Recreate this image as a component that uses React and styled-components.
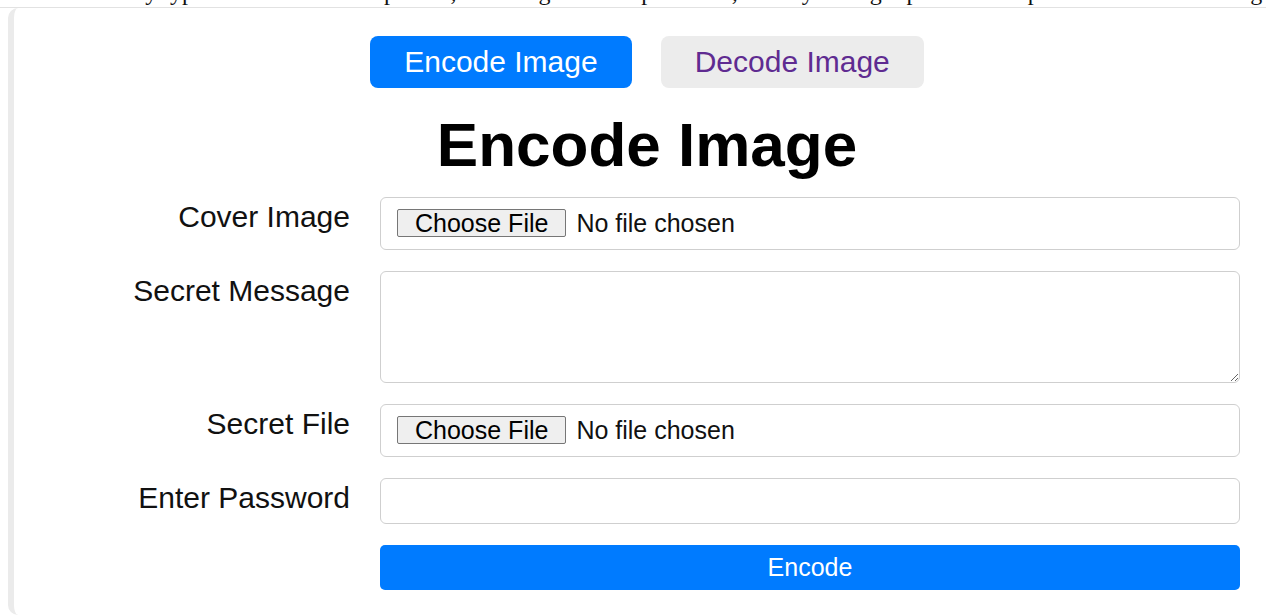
import styled, { createGlobalStyle } from "styled-components";
import { useState } from "react";

const GlobalStyle = createGlobalStyle`
  html, body {
    margin: 0;
    padding: 0;
    background: #fff;
    overflow: hidden;
  }
  body {
    font-family: "Liberation Sans", Arial, sans-serif;
  }
`;

// the description line above the tool, mostly scrolled out of view
const Intro = styled.div`
  height: 7px;
  overflow: hidden;
  border-bottom: 1px solid #e2e2e2;
  padding-left: 70px;
  white-space: nowrap;
  font-family: "Liberation Serif", "Times New Roman", serif;
  font-size: 24px;
  line-height: 28px;
  color: #111;

  p {
    margin: -22px 0 0;
  }
`;

const Page = styled.main`
  padding-left: 8px;
`;

const Card = styled.section`
  box-sizing: border-box;
  width: 1272px;
  min-height: 607px;
  padding: 28px 0 25px;
  background: #fff;
  border-left: 6px solid #ebebeb;
  border-radius: 10px 0 0 10px;
`;

const Tabs = styled.nav`
  display: flex;
  justify-content: center;
  gap: 29px;
`;

const TabButton = styled.button`
  height: 52px;
  padding: 0 34px;
  border: none;
  border-radius: 8px;
  font-family: inherit;
  font-size: 30px;
  cursor: pointer;
  background: ${(p) => (p.$active ? "#007bff" : "#ececec")};
  color: ${(p) => (p.$active ? "#fff" : "#5f2b91")};
`;

const Title = styled.h1`
  margin: 21px 0 17px;
  text-align: center;
  font-size: 62px;
  font-weight: 700;
  color: #000;
`;

const Form = styled.form`
  display: grid;
  grid-template-columns: 336px 860px;
  column-gap: 30px;
  row-gap: 21px;
`;

const Label = styled.label`
  padding-top: 3px;
  text-align: right;
  font-size: 30px;
  color: #111;
`;

const FileBox = styled.div`
  box-sizing: border-box;
  height: 53px;
  display: flex;
  align-items: center;
  padding: 0 16px;
  border: 1px solid #cfcfcf;
  border-radius: 6px;
`;

const FileInput = styled.input`
  font-family: "Liberation Sans", Arial, sans-serif;
  font-size: 25px;
  color: #111;

  &::file-selector-button {
    font: inherit;
    height: 28px;
    line-height: 26px;
    padding: 0 17px;
    margin-right: 10px;
    border: 1px solid #767676;
    border-radius: 2px;
    background: #efefef;
    color: #000;
  }
`;

const MessageArea = styled.textarea`
  box-sizing: border-box;
  width: 100%;
  height: 112px;
  padding: 10px 16px;
  border: 1px solid #cfcfcf;
  border-radius: 6px;
  font-family: inherit;
  font-size: 25px;
  resize: vertical;
`;

const TextInput = styled.input`
  box-sizing: border-box;
  width: 100%;
  height: 46px;
  padding: 0 16px;
  border: 1px solid #cfcfcf;
  border-radius: 6px;
  font-family: inherit;
  font-size: 25px;
`;

const SubmitButton = styled.button`
  grid-column: 2;
  height: 45px;
  border: none;
  border-radius: 5px;
  background: #007bff;
  color: #fff;
  font-family: inherit;
  font-size: 25px;
  cursor: pointer;
`;

function App() {
  const [mode, setMode] = useState("encode");

  return (
    <>
      <GlobalStyle />
      <Intro>
        <p>
          Hide any type of text or file in a picture, encoding it with a
          password, so only the right person can open and read the message.
        </p>
      </Intro>
      <Page>
        <Card>
          <Tabs>
            <TabButton
              type="button"
              $active={mode === "encode"}
              onClick={() => setMode("encode")}
            >
              Encode Image
            </TabButton>
            <TabButton
              type="button"
              $active={mode === "decode"}
              onClick={() => setMode("decode")}
            >
              Decode Image
            </TabButton>
          </Tabs>
          <Title>Encode Image</Title>
          <Form onSubmit={(e) => e.preventDefault()}>
            <Label htmlFor="cover">Cover Image</Label>
            <FileBox>
              <FileInput id="cover" type="file" accept="image/*" />
            </FileBox>

            <Label htmlFor="message">Secret Message</Label>
            <MessageArea id="message" />

            <Label htmlFor="secret">Secret File</Label>
            <FileBox>
              <FileInput id="secret" type="file" />
            </FileBox>

            <Label htmlFor="password">Enter Password</Label>
            <TextInput id="password" type="password" />

            <SubmitButton type="submit">Encode</SubmitButton>
          </Form>
        </Card>
      </Page>
    </>
  );
}

export default App;
